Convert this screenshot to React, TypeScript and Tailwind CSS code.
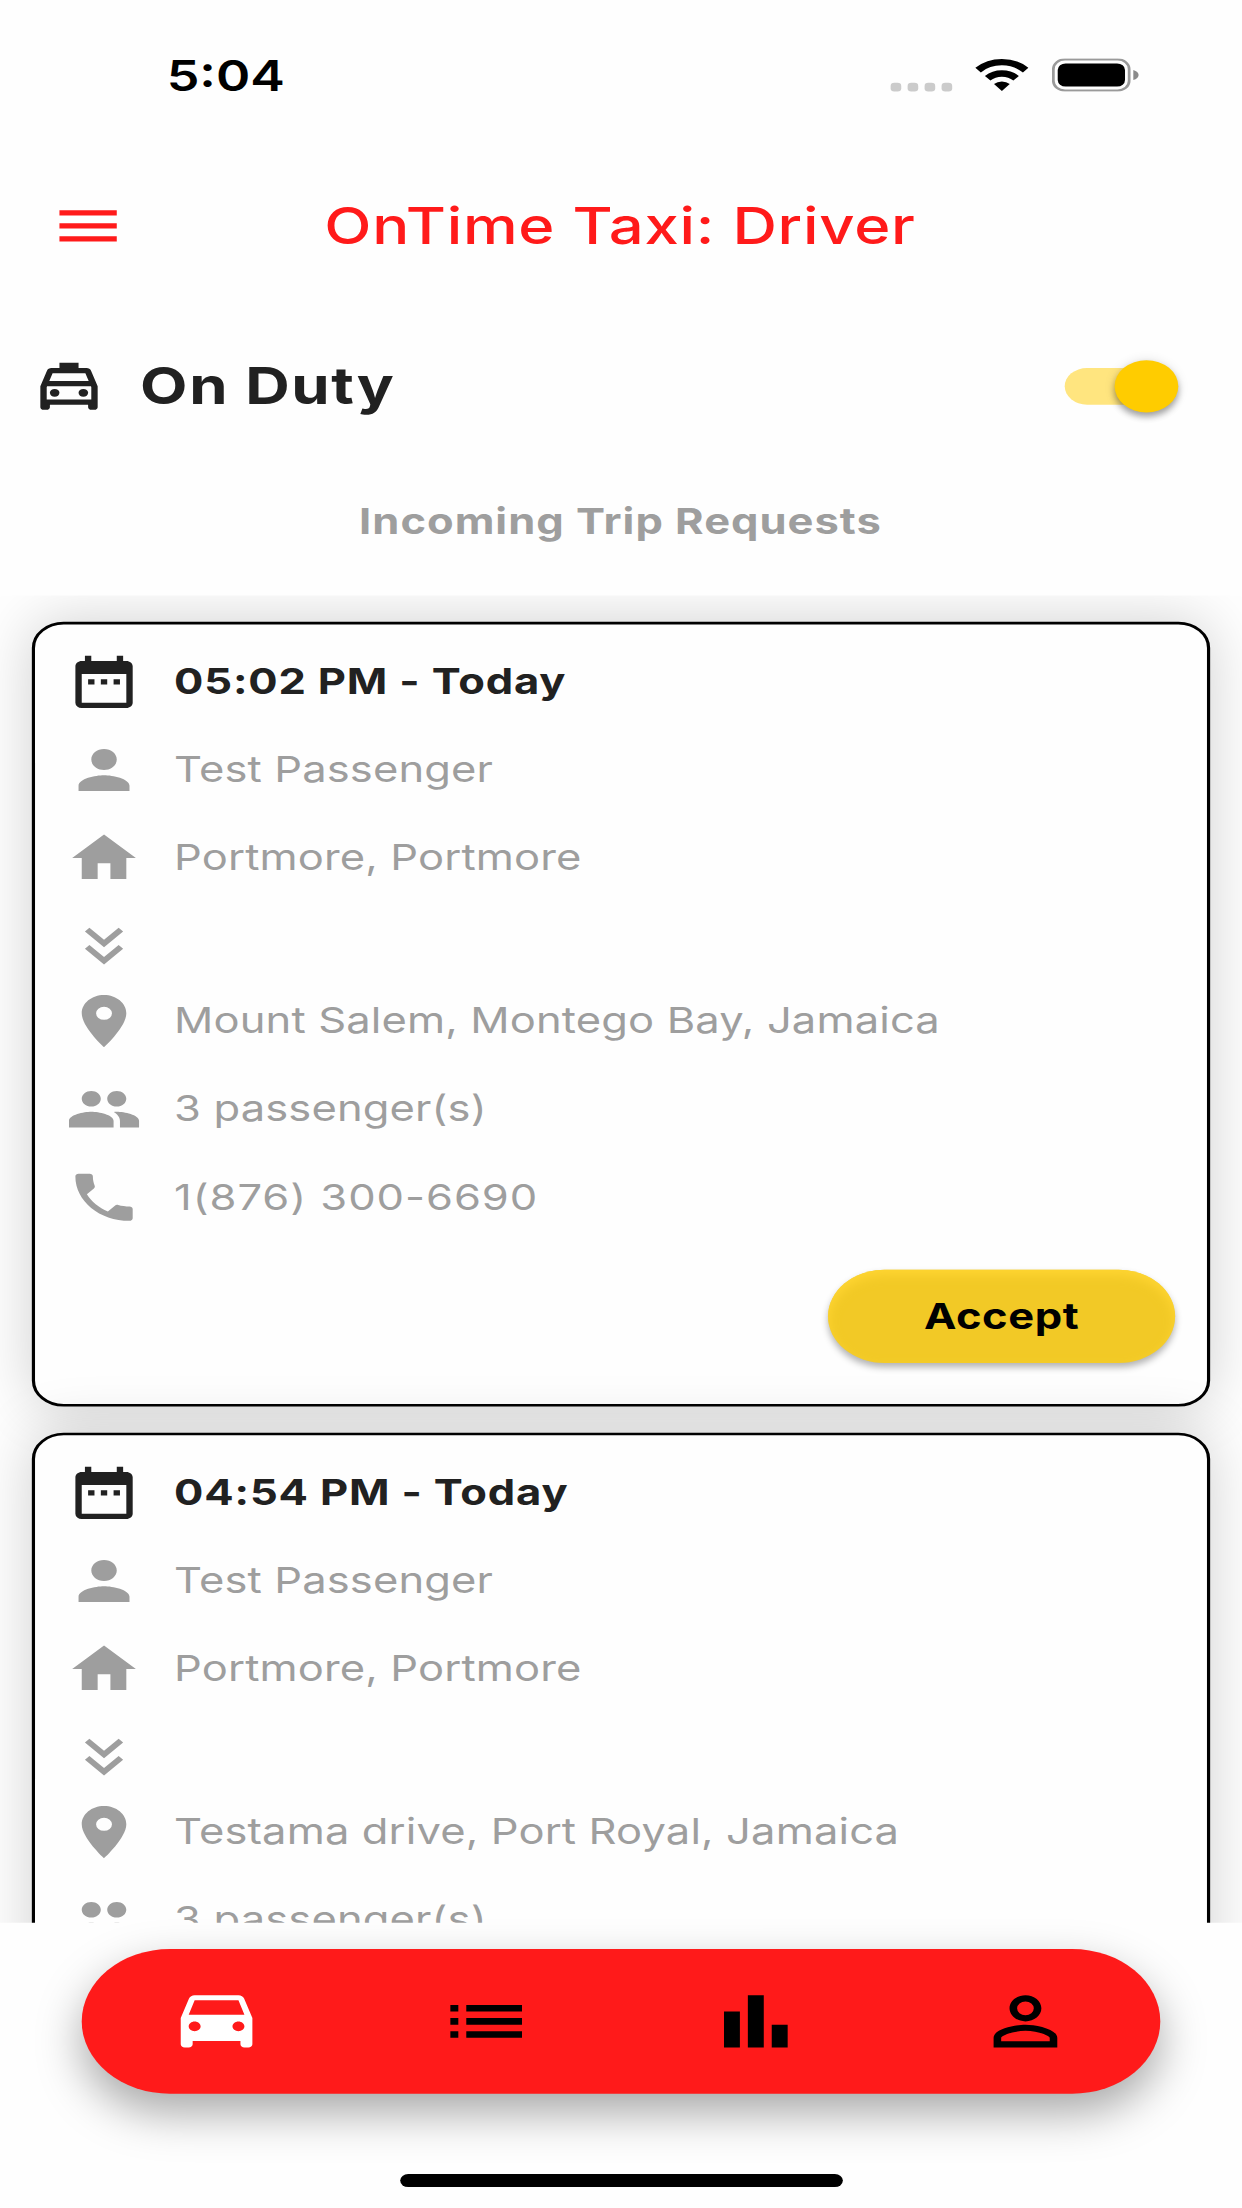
import type { IconType } from "react-icons";
import {
  MdBarChart,
  MdDateRange,
  MdDriveEta,
  MdHome,
  MdKeyboardDoubleArrowDown,
  MdList,
  MdLocationOn,
  MdMenu,
  MdOutlineLocalTaxi,
  MdPeople,
  MdPerson,
  MdPersonOutline,
  MdPhone,
} from "react-icons/md";

type Trip = {
  time: string;
  passenger: string;
  from: string;
  to: string;
  seats: number;
  phone?: string;
};

const trips: Trip[] = [
  {
    time: "05:02 PM - Today",
    passenger: "Test Passenger",
    from: "Portmore, Portmore",
    to: "Mount Salem, Montego Bay, Jamaica",
    seats: 3,
    phone: "1(876) 300-6690",
  },
  {
    time: "04:54 PM - Today",
    passenger: "Test Passenger",
    from: "Portmore, Portmore",
    to: "Testama drive, Port Royal, Jamaica",
    seats: 3,
  },
];

const tabs: { icon: IconType; active?: boolean }[] = [
  { icon: MdDriveEta, active: true },
  { icon: MdList },
  { icon: MdBarChart },
  { icon: MdPersonOutline },
];

const StatusBar = () => (
  <div className="flex h-[141px] shrink-0 items-start justify-between pl-[157px] pr-[97px] pt-[57px]">
    <div className="text-[49px] font-semibold leading-[60px] tracking-[0px] text-black">
      5:04
    </div>
    <div className="flex pt-[10px]">
      <div className="mr-[21px] flex gap-[6px] pt-[28px]">
        <div className="size-[10px] rounded-[3.5px] bg-[#cbcbcb]" />
        <div className="size-[10px] rounded-[3.5px] bg-[#cbcbcb]" />
        <div className="size-[10px] rounded-[3.5px] bg-[#cbcbcb]" />
        <div className="size-[10px] rounded-[3.5px] bg-[#cbcbcb]" />
      </div>
      <svg className="mr-[22px] h-[38px] w-[51px]" viewBox="0 0 51 38">
        <path
          d="M3.4 13.4A32 32 0 0 1 48.2 13.4"
          fill="none"
          stroke="#000"
          strokeWidth="7.4"
        />
        <path
          d="M12.4 22.8A19.2 19.2 0 0 1 39.2 22.8"
          fill="none"
          stroke="#000"
          strokeWidth="7.4"
        />
        <path d="M18.4 29.4A10.6 10.6 0 0 1 33.2 29.4L25.8 37.4Z" />
      </svg>
      <svg className="h-[38px] w-[82px]" viewBox="0 0 82 38">
        <rect
          fill="none"
          height="35.6"
          rx="11"
          stroke="#9a9a9a"
          strokeWidth="2.6"
          width="71.4"
          x="1.3"
          y="1.2"
        />
        <rect height="26.6" rx="7.5" width="63.4" x="5.4" y="5.7" />
        <path d="M76.6 13.2C79.8 14.4 81.6 16.5 81.6 19S79.8 23.6 76.6 24.8Z" fill="#8a8a8a" />
      </svg>
    </div>
  </div>
);

const Header = () => (
  <div className="grid h-[235px] shrink-0 grid-cols-[72px_1fr_72px] items-center pl-[47px] pr-[49px]">
    <MdMenu className="size-[72px] text-[#ff1a1a]" />
    <div className="text-center text-[58px] font-medium leading-[72px] tracking-[0.7px] text-[#ff1a1a]">
      OnTime Taxi: Driver
    </div>
  </div>
);

const DutySwitch = () => (
  <div className="flex h-[42px] w-[107px] items-center">
    <div className="flex h-[42px] w-[99px] items-center rounded-full bg-[#ffe57f]">
      <div className="ml-[47px] size-[60px] shrink-0 rounded-full bg-[#ffcc00] shadow-[0_5px_7px_rgba(0,0,0,0.32),0_1px_12px_rgba(0,0,0,0.12)]" />
    </div>
  </div>
);

const Row = ({ icon: Icon, text, bold }: { icon: IconType; text: string; bold?: boolean }) => (
  <div className="flex h-[101px] items-center">
    <Icon className={bold ? "size-[72px] text-[#212121]" : "size-[72px] text-[#9e9e9e]"} />
    <div
      className={
        bold
          ? "ml-[30px] pb-[2px] text-[41px] font-bold leading-[50px] tracking-[0.78px] text-[#212121]"
          : "ml-[30px] pb-px text-[41px] leading-[50px] tracking-[0.12px] text-[#9e9e9e]"
      }
    >
      {text}
    </div>
  </div>
);

const TripCard = ({ trip }: { trip: Trip }) => (
  <div className="h-[900px] shrink-0 rounded-[30px] border-[3px] border-black bg-[#fefefe] px-[29px] pt-[15px] shadow-[0_0_60px_rgba(0,0,0,0.18)]">
    <Row bold icon={MdDateRange} text={trip.time} />
    <Row icon={MdPerson} text={trip.passenger} />
    <Row icon={MdHome} text={trip.from} />
    <div className="h-[86px] pt-[15px]">
      <MdKeyboardDoubleArrowDown className="size-[72px] text-[#9e9e9e]" />
    </div>
    <Row icon={MdLocationOn} text={trip.to} />
    <Row icon={MdPeople} text={`${trip.seats} passenger(s)`} />
    {trip.phone && (
      <>
        <div className="flex h-[101px] items-center">
          <MdPhone className="size-[72px] text-[#9e9e9e]" />
          <div className="ml-[30px] pb-[2px] text-[41px] leading-[50px] tracking-[0.9px] text-[#9e9e9e]">
            {trip.phone}
          </div>
        </div>
        <div className="flex justify-end pr-px pt-[33px]">
          <button
            className="h-[107px] w-[327px] rounded-full bg-[#f2c926] pb-[2px] text-[41px] font-bold leading-[50px] tracking-[0.5px] text-black
            shadow-[0_5px_8px_rgba(0,0,0,0.3),inset_0_6px_12px_#ffd633]"
          >
            Accept
          </button>
        </div>
      </>
    )}
  </div>
);

const BottomNav = () => (
  <div className="mx-[77px] mt-[30px] grid h-[166px] shrink-0 grid-cols-4 place-items-center rounded-full bg-[#ff1a1a] shadow-[0_22px_46px_rgba(0,0,0,0.34)]">
    {tabs.map(({ icon: Icon, active }, i) => (
      <Icon key={i} className={active ? "size-[90px] text-white" : "size-[90px] text-black"} />
    ))}
  </div>
);

// The screen is laid out at its native 1170x2532 and stretched to the 1242x2208 frame.
export default function App() {
  return (
    <div className="h-[2208px] w-[1242px] overflow-hidden bg-[#fefefe]">
      <div className="flex h-[2532px] w-[1170px] origin-top-left scale-x-[1.061538] scale-y-[0.872038] flex-col font-['Inter',sans-serif]">
        <StatusBar />
        <Header />
        <div className="flex h-[133px] shrink-0 items-center pl-[29px] pr-[60px]">
          <MdOutlineLocalTaxi className="size-[72px] text-[#212121]" />
          <div className="ml-[31px] grow pb-[2px] text-[58px] font-bold leading-[72px] tracking-[1.5px] text-[#212121]">
            On Duty
          </div>
          <DutySwitch />
        </div>
        <div className="flex h-[174px] shrink-0 items-center justify-center pr-px pt-[2px]">
          <div className="text-[41px] font-bold leading-[50px] tracking-[0.93px] text-[#9e9e9e]">
            Incoming Trip Requests
          </div>
        </div>
        <div className="flex h-[1522px] shrink-0 flex-col gap-[30px] overflow-hidden p-[30px]">
          {trips.map((trip) => (
            <TripCard key={trip.time} trip={trip} />
          ))}
        </div>
        <BottomNav />
        <div className="mx-auto mt-[92px] h-[15px] w-[417px] shrink-0 rounded-full bg-black" />
      </div>
    </div>
  );
}
